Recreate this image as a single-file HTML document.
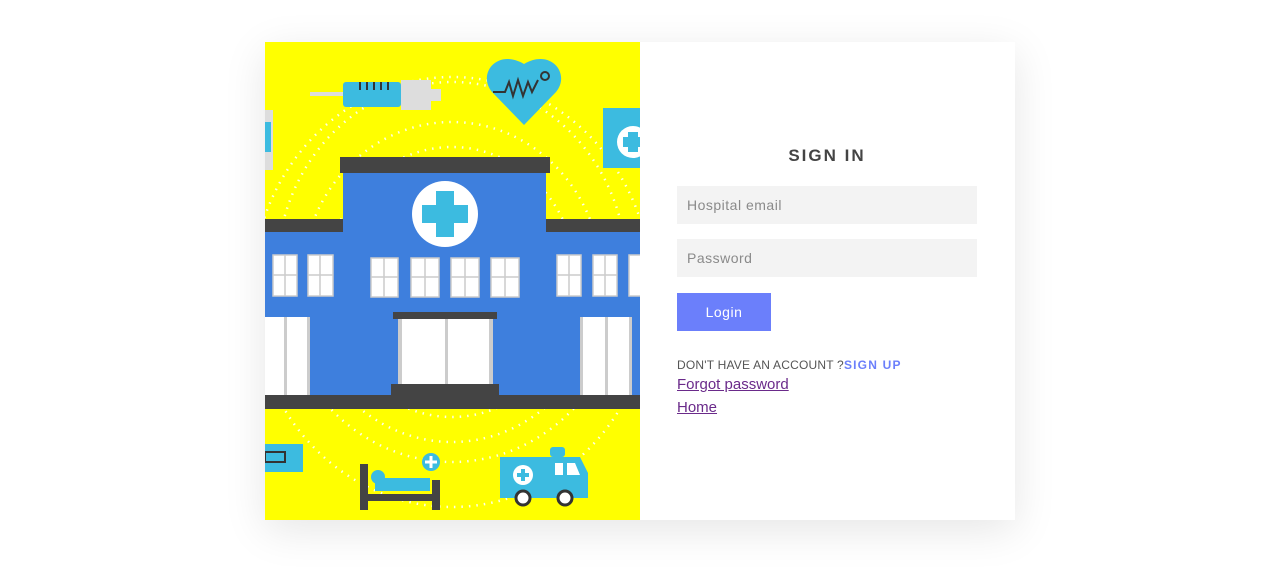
<!DOCTYPE html>
<html><head><meta charset="utf-8"><style>
body{margin:0;width:1279px;height:579px;background:#fff;font-family:"Liberation Sans",sans-serif;overflow:hidden;position:relative}
.card{position:absolute;left:265px;top:42px;width:750px;height:478px;background:#fff;box-shadow:0 10px 40px rgba(0,0,0,0.10)}
.img{position:absolute;left:0;top:0;width:375px;height:478px}
.form{position:absolute;left:412px;top:0;width:300px}
h2{position:absolute;top:104px;left:0;width:300px;text-align:center;margin:0;font-size:17px;letter-spacing:2px;color:#444;font-weight:bold}
.inp{position:absolute;left:0;width:290px;height:38px;background:#f3f3f3;color:#8a8a8a;font-size:14px;line-height:38px;padding-left:10px;letter-spacing:.5px}
.btn{position:absolute;left:0;top:251px;width:94px;height:38px;background:#6b7ffb;color:#fff;font-size:14px;text-align:center;line-height:38px;letter-spacing:.5px}
.t{position:absolute;left:0;top:316px;font-size:12px;color:#555;letter-spacing:.2px}
.t b{color:#6b7ffb;letter-spacing:1.2px}
a{position:absolute;left:0;color:#6a2a8a;font-size:15px;text-decoration:underline}
</style></head><body>
<div class="card">
<svg class="img" viewBox="0 0 375 478">
<rect width="375" height="478" fill="#ffff00"/>
<g fill="none" stroke="#fff" stroke-width="2.5" stroke-dasharray="1.5 6" opacity=".9">
<ellipse cx="187" cy="230" rx="175" ry="190"/><ellipse cx="187" cy="240" rx="150" ry="160"/><ellipse cx="187" cy="250" rx="200" ry="215"/><ellipse cx="187" cy="240" rx="125" ry="135"/>
</g>
<rect x="45" y="50" width="35" height="4" fill="#ddd"/>
<rect x="78" y="40" width="58" height="25" rx="3" fill="#3cbbe0"/>
<rect x="136" y="38" width="30" height="30" fill="#ddd"/><rect x="166" y="47" width="10" height="12" fill="#ddd"/>
<g stroke="#333" stroke-width="2"><path d="M95 40v8M102 40v8M109 40v8M116 40v8M123 40v8"/></g>
<path d="M259 83 L227 50 C212 32 232 6 259 22 C286 6 306 32 291 50 Z" fill="#3cbbe0"/>
<path d="M228 50h12l4-10 4 14 5-16 5 16 5-14 4 10 6-12" stroke="#333" stroke-width="2" fill="none"/>
<circle cx="280" cy="34" r="4" stroke="#333" stroke-width="2" fill="none"/>
<rect x="0" y="68" width="8" height="60" fill="#ddd"/><rect x="0" y="80" width="6" height="30" fill="#3cbbe0"/>
<rect x="338" y="66" width="40" height="60" fill="#3cbbe0"/><circle cx="368" cy="100" r="16" fill="#fff"/><rect x="363" y="90" width="10" height="20" fill="#3cbbe0"/><rect x="358" y="95" width="20" height="10" fill="#3cbbe0"/>
<rect x="0" y="177" width="375" height="13" fill="#444"/>
<rect x="0" y="190" width="375" height="165" fill="#3e7fdd"/>
<rect x="75" y="115" width="210" height="16" fill="#444"/>
<rect x="78" y="131" width="203" height="225" fill="#3e7fdd"/>
<circle cx="180" cy="172" r="33" fill="#fff"/>
<rect x="171" y="149" width="18" height="46" fill="#3cbbe0"/><rect x="157" y="163" width="46" height="18" fill="#3cbbe0"/>
<g fill="#fff" stroke="#ccc" stroke-width="1.5">
<rect x="106" y="216" width="27" height="39"/><rect x="146" y="216" width="28" height="39"/><rect x="186" y="216" width="28" height="39"/><rect x="226" y="216" width="28" height="39"/>
<rect x="8" y="213" width="24" height="41"/><rect x="43" y="213" width="25" height="41"/>
<rect x="292" y="213" width="24" height="41"/><rect x="328" y="213" width="24" height="41"/><rect x="364" y="213" width="20" height="41"/>
<path d="M119 216v39M106 235h27M160 216v39M146 235h28M200 216v39M186 235h28M240 216v39M226 235h28M20 213v41M8 233h24M55 213v41M43 233h25M304 213v41M292 233h24M340 213v41M328 233h24"/>
</g>
<rect x="128" y="270" width="104" height="7" fill="#444"/>
<rect x="133" y="277" width="95" height="66" fill="#fff"/><rect x="133" y="277" width="4" height="66" fill="#ccc"/><rect x="180" y="277" width="3" height="66" fill="#ccc"/><rect x="224" y="277" width="4" height="66" fill="#ccc"/>
<rect x="126" y="342" width="108" height="12" fill="#444"/>
<rect x="0" y="275" width="45" height="78" fill="#fff"/><rect x="19" y="275" width="3" height="78" fill="#ccc"/><rect x="42" y="275" width="3" height="78" fill="#ccc"/>
<rect x="315" y="275" width="51" height="78" fill="#fff"/><rect x="315" y="275" width="3" height="78" fill="#ccc"/><rect x="340" y="275" width="3" height="78" fill="#ccc"/><rect x="364" y="275" width="3" height="78" fill="#ccc"/>
<rect x="0" y="353" width="375" height="14" fill="#444"/>
<rect x="0" y="402" width="38" height="28" fill="#3cbbe0"/><rect x="0" y="410" width="20" height="10" fill="none" stroke="#333" stroke-width="2"/>
<rect x="95" y="422" width="8" height="46" fill="#444"/><rect x="167" y="438" width="8" height="30" fill="#444"/><rect x="95" y="452" width="80" height="7" fill="#444"/>
<circle cx="113" cy="435" r="7" fill="#3cbbe0"/><rect x="110" y="436" width="55" height="13" fill="#3cbbe0"/>
<circle cx="166" cy="420" r="9" fill="#3cbbe0"/><path d="M166 414v12M160 420h12" stroke="#fff" stroke-width="3"/>
<rect x="285" y="405" width="15" height="10" rx="3" fill="#3cbbe0"/>
<path d="M235 415h80l8 16v25h-88z" fill="#3cbbe0"/>
<circle cx="258" cy="433" r="10" fill="#fff"/><path d="M258 427v12M252 433h12" stroke="#3cbbe0" stroke-width="4"/>
<rect x="290" y="421" width="8" height="12" fill="#fff"/><path d="M302 421h8l5 12h-13z" fill="#fff"/>
<circle cx="258" cy="456" r="7" fill="#fff" stroke="#333" stroke-width="3"/><circle cx="300" cy="456" r="7" fill="#fff" stroke="#333" stroke-width="3"/>
</svg>
<div class="form">
<h2>SIGN IN</h2>
<div class="inp" style="top:144px">Hospital email</div>
<div class="inp" style="top:197px">Password</div>
<div class="btn">Login</div>
<div class="t">DON'T HAVE AN ACCOUNT ?<b>SIGN UP</b></div>
<a style="top:334px">Forgot password</a>
<a style="top:357px">Home</a>
</div>
</div>
</body></html>
